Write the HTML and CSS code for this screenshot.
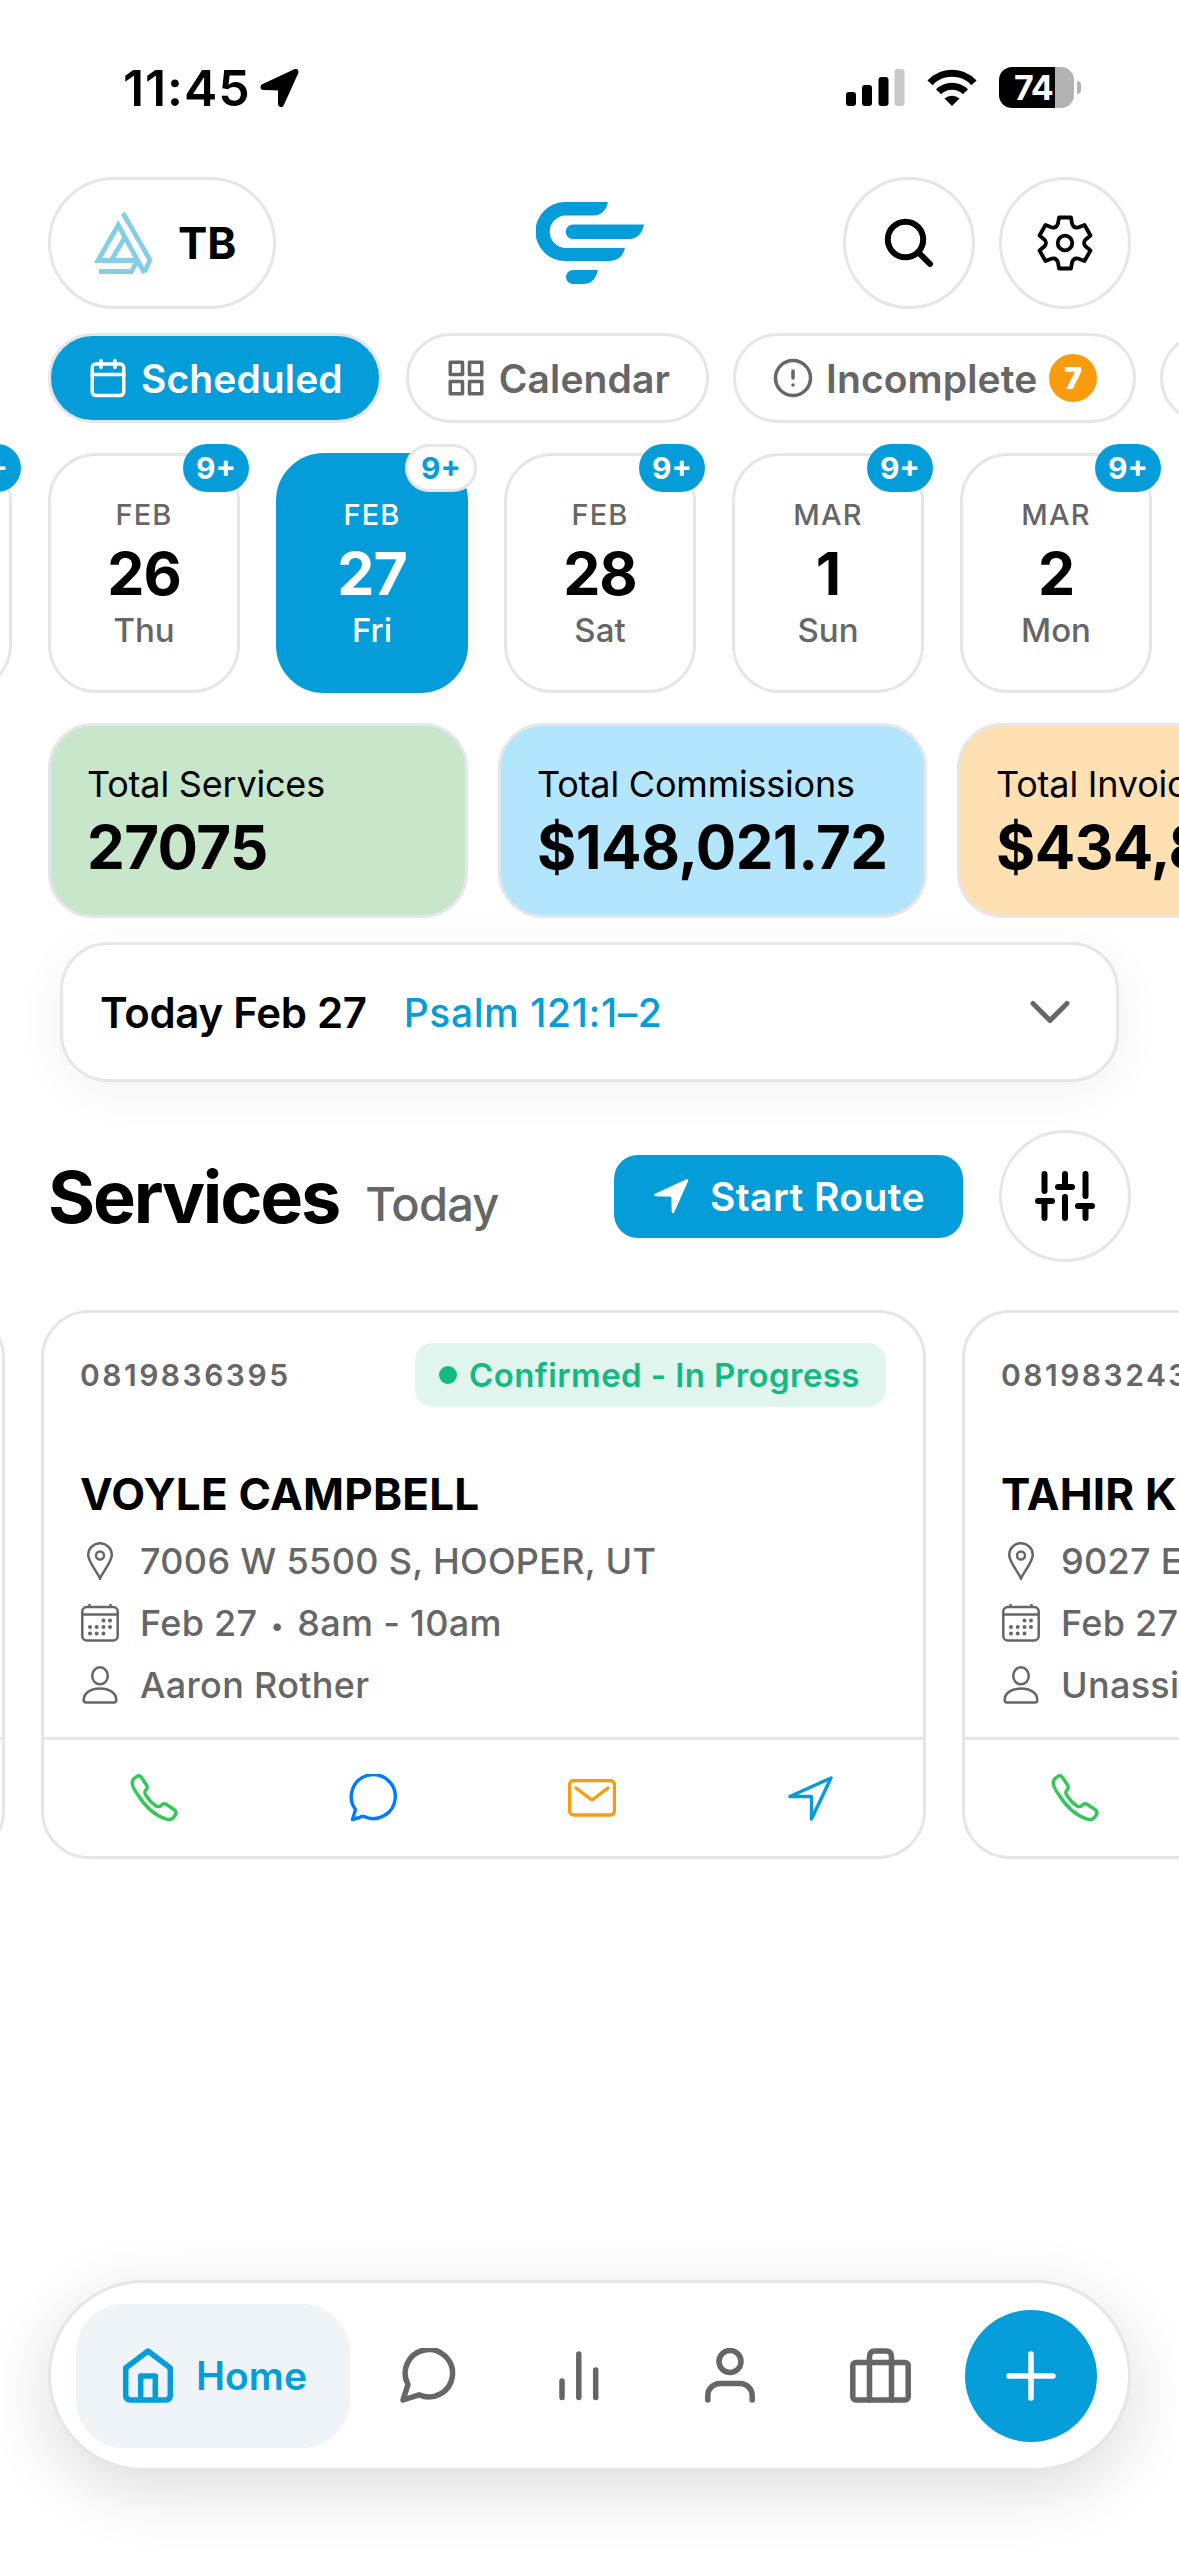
FILE: index.html
```
<!DOCTYPE html>
<html lang="en">
<head>
    <meta charset="UTF-8">
    <meta name="viewport" content="width=device-width, initial-scale=1.0">
    <title>Services</title>
    <link rel="stylesheet" href="styles.css">
</head>
<body>
    <!-- Status bar -->
    <div class="status-bar">
        <div class="status-left">
            <span class="time">11:45</span>
            <svg class="location" width="39" height="38" viewBox="0 0 39 38"><path d="M3.5 18L35.5 3L21 35V18.5z" fill="#000" stroke="#000" stroke-width="6" stroke-linejoin="round"/></svg>
        </div>
        <div class="status-right">
            <svg width="59" height="37" viewBox="0 0 59 37"><rect x="0" y="23" width="10" height="14" rx="3"/><rect x="16" y="16" width="10" height="21" rx="3"/><rect x="32.5" y="8" width="10" height="29" rx="3"/><rect x="48.5" y="0" width="10" height="37" rx="3" fill="#c8c8c8"/></svg>
            <svg width="50" height="37" viewBox="0 0 50 37"><path d="M3 13.8A30 30 0 0 1 47 13.8M11.5 22.8A19 19 0 0 1 38.5 22.8" fill="none" stroke="#000" stroke-width="7"/><path d="M17.5 29.5A12 12 0 0 1 32.5 29.5L25 37z"/></svg>
            <div class="battery"><span>74</span></div>
        </div>
    </div>

    <!-- Header -->
    <header class="header">
        <button class="account">
            <svg width="60" height="67" viewBox="0 0 60 67" fill="none" stroke="#86cde6" stroke-width="4.8"><path d="M50.500 63L24.300 15L4 50.500H42M29 3L56 50L50.500 62M17.500 50L30.500 28M5 61.500H37.500L42 53"/></svg>
            <span class="account-name">TB</span>
        </button>
        <svg class="logo" width="108" height="82" viewBox="0 0 108 82" fill="#059dd9"><path d="M72 0H29A29.5 29.5 0 0 0 29 59H73Q86 59 89 46H30A16 16 0 0 1 30 13.5H57Q69 13.5 72 0zM37 22.5H108Q105 37 93 37H37A7.2 7.2 0 0 1 37 22.5zM37 68H62Q59 82 47 82H37A7 7 0 0 1 37 68z"/></svg>
        <div class="header-actions">
            <button class="circle"><svg width="50" height="50" viewBox="0 0 50 50" fill="none" stroke="#000" stroke-width="6" stroke-linecap="round"><circle cx="21.5" cy="21.5" r="17.7"/><path d="M34.5 34.500L46 46"/></svg></button>
            <button class="circle"><svg width="56" height="56" viewBox="-28 -28 56 56" fill="none" stroke="#000" stroke-width="3.8" stroke-linejoin="round"><path d="M-6-25.500H6L7-19.500Q8.500-14.500 13-15.500L19.500-18L25.500-7.500L21-3.800Q17 0 21 3.800L25.500 7.500L19.500 18L13 15.500Q8.500 14.500 7 19.500L6 25.500H-6L-7 19.500Q-8.500 14.500-13 15.500L-19.500 18L-25.500 7.500L-21 3.800Q-17 0-21-3.800L-25.500-7.500L-19.500-18L-13-15.500Q-8.500-14.500-7-19.500z"/><circle r="7.3"/></svg></button>
        </div>
    </header>

    <!-- View tabs -->
    <nav class="tabs">
        <button class="tab active">
            <svg class="tab-icon" viewBox="0 0 24 24"><rect x="3" y="4" width="18" height="18" rx="2"/><path d="M16 2v4M8 2v4M3 10h18"/></svg>
            <span>Scheduled</span>
        </button>
        <button class="tab">
            <svg class="tab-icon" viewBox="0 0 24 24"><path d="M3 3h7v7H3zM14 3h7v7h-7zM14 14h7v7h-7zM3 14h7v7H3z"/></svg>
            <span>Calendar</span>
        </button>
        <button class="tab">
            <svg class="tab-icon" viewBox="0 0 24 24"><circle cx="12" cy="12" r="10"/><path d="M12 8v4M12 16h.01"/></svg>
            <span>Incomplete</span>
            <b class="count">7</b>
        </button>
        <button class="tab tab-next"></button>
    </nav>

    <!-- Dates -->
    <div class="dates">
        <div class="date"><b class="badge">9+</b></div>
        <div class="date"><b class="badge">9+</b><span class="month">FEB</span><span class="day">26</span><span class="weekday">Thu</span></div>
        <div class="date selected"><b class="badge">9+</b><span class="month">FEB</span><span class="day">27</span><span class="weekday">Fri</span></div>
        <div class="date"><b class="badge">9+</b><span class="month">FEB</span><span class="day">28</span><span class="weekday">Sat</span></div>
        <div class="date"><b class="badge">9+</b><span class="month">MAR</span><span class="day">1</span><span class="weekday">Sun</span></div>
        <div class="date"><b class="badge">9+</b><span class="month">MAR</span><span class="day">2</span><span class="weekday">Mon</span></div>
    </div>

    <!-- Totals -->
    <div class="stats">
        <div class="stat green"><span class="stat-label">Total Services</span><span class="stat-value">27075</span></div>
        <div class="stat blue"><span class="stat-label">Total Commissions</span><span class="stat-value">$148,021.72</span></div>
        <div class="stat orange"><span class="stat-label">Total Invoices</span><span class="stat-value">$434,800.00</span></div>
    </div>

    <div class="verse">
        <span class="verse-date">Today Feb 27</span>
        <span class="verse-ref">Psalm 121:1–2</span>
        <svg class="chevron" width="42" height="26" viewBox="0 0 42 26" fill="none" stroke="#666" stroke-width="5" stroke-linecap="round" stroke-linejoin="round"><path d="M4 4.5L21 21.5L38 4.5"/></svg>
    </div>

    <!-- Services -->
    <div class="services-head">
        <h1>Services</h1>
        <span class="services-day">Today</span>
        <button class="route">
            <svg width="35" height="35" viewBox="0 0 35 35"><path d="M1.5 16L33 1.5L19 33L18.500 16.5z" fill="#fff" stroke="#fff" stroke-width="2.5" stroke-linejoin="round"/></svg>
            <span>Start Route</span>
        </button>
        <button class="circle"><svg width="60" height="52" viewBox="0 0 60 52" fill="none" stroke="#000" stroke-width="6" stroke-linecap="round"><path d="M9.5 4V21M3 31H17M9.5 31V48M30 4V17M23 17H37M30 27V48M50.5 4V26M43 36H57M50.5 36V48"/></svg></button>
    </div>

    <div class="services">
        <div class="service"><div class="service-body"></div><div class="service-actions"></div></div>
        <div class="service">
            <div class="service-body">
                <div class="service-top">
                    <span class="service-id">0819836395</span>
                    <span class="state"><i></i><span>Confirmed - In Progress</span></span>
                </div>
                <h2>VOYLE CAMPBELL</h2>
                <div class="line"><svg class="line-icon" viewBox="0 0 38 38"><path d="M19 36.500C17 31 7.200 20 7.200 13A11.800 11.800 0 0 1 30.800 13C30.800 20 21 31 19 36.500z"/><circle cx="19" cy="13.5" r="4"/></svg><span>7006 W 5500 S, HOOPER, UT</span></div>
                <div class="line"><svg class="line-icon" viewBox="0 0 38 38"><rect x="1.3" y="3" width="35.4" height="33.5" rx="4.5"/><path d="M1.300 10.500H36.700M8.500 0V3M29.500 0V3"/><path class="dots" d="M22.500 16.500h0M29 16.500h0M9 23h0M15.700 23h0M22.500 23h0M29 23h0M9 29.500h0M15.700 29.500h0M22.500 29.500h0"/></svg><span>Feb 27 <small>•</small> 8am - 10am</span></div>
                <div class="line"><svg class="line-icon" viewBox="0 0 38 38"><ellipse cx="19" cy="9.8" rx="7.8" ry="8.5"/><path d="M2.700 34C2.700 27 9.500 22.500 19 22.500S35.300 27 35.300 34Q35.300 36.500 33 36.500H5Q2.700 36.500 2.700 34z"/></svg><span>Aaron Rother</span></div>
            </div>
            <div class="service-actions">
                <svg class="phone" width="48" height="48" viewBox="0 0 48 48"><path d="M4 4.500L7 2.300Q9.500 1 11.500 3.500L16.500 11Q18.300 14 15.500 16.500Q14 18.500 16 21.500Q20 28 26 32Q29 33.500 31 31.500Q33.500 28.500 36.500 30.500L44 35.500Q47 37.500 45.500 40.500L43 44Q40.500 46.500 36 45Q20 40 8 21Q-1 9 4 4.500z"/></svg>
                <svg class="chat" width="48" height="48" viewBox="0 0 48 48"><path d="M3.500 45.500L6.500 35.500A22 22 0 1 1 15 42.500Q12.500 42 10.500 43.500z"/></svg>
                <svg class="mail" width="48" height="38" viewBox="0 0 48 38"><rect x="1.5" y="1.5" width="45" height="34.5" rx="4.5"/><path d="M8 9L24 21L40 9"/></svg>
                <svg class="nav" width="45" height="45" viewBox="0 0 45 45"><path d="M1.800 20.500L43 2L23.500 43V20.500z"/></svg>
            </div>
        </div>
        <div class="service">
            <div class="service-body">
                <div class="service-top"><span class="service-id">0819832431</span></div>
                <h2>TAHIR KHAN</h2>
                <div class="line"><svg class="line-icon" viewBox="0 0 38 38"><path d="M19 36.500C17 31 7.200 20 7.200 13A11.800 11.800 0 0 1 30.800 13C30.800 20 21 31 19 36.500z"/><circle cx="19" cy="13.5" r="4"/></svg><span>9027 E</span></div>
                <div class="line"><svg class="line-icon" viewBox="0 0 38 38"><rect x="1.3" y="3" width="35.4" height="33.5" rx="4.5"/><path d="M1.300 10.500H36.700M8.500 0V3M29.500 0V3"/><path class="dots" d="M22.500 16.500h0M29 16.500h0M9 23h0M15.700 23h0M22.500 23h0M29 23h0M9 29.500h0M15.700 29.500h0M22.500 29.500h0"/></svg><span>Feb 27</span></div>
                <div class="line"><svg class="line-icon" viewBox="0 0 38 38"><ellipse cx="19" cy="9.8" rx="7.8" ry="8.5"/><path d="M2.700 34C2.700 27 9.500 22.500 19 22.500S35.300 27 35.300 34Q35.300 36.500 33 36.500H5Q2.700 36.500 2.700 34z"/></svg><span>Unassigned</span></div>
            </div>
            <div class="service-actions">
                <svg class="phone" width="48" height="48" viewBox="0 0 48 48"><path d="M4 4.500L7 2.300Q9.500 1 11.500 3.500L16.500 11Q18.300 14 15.500 16.500Q14 18.500 16 21.500Q20 28 26 32Q29 33.500 31 31.500Q33.500 28.500 36.500 30.500L44 35.500Q47 37.500 45.500 40.500L43 44Q40.500 46.500 36 45Q20 40 8 21Q-1 9 4 4.500z"/></svg>
            </div>
        </div>
    </div>

    <!-- Bottom navigation -->
    <nav class="bottom-nav">
        <a class="home">
            <svg width="50" height="55" viewBox="0 0 50 55"><path d="M25 3L47.300 20V47Q47.300 52 42 52H8Q2.700 52 2.700 47V20zM17.700 52V28H32.300V52"/></svg>
            <span>Home</span>
        </a>
        <div class="nav-items">
            <svg width="56" height="55" viewBox="0 0 56 55"><path d="M3 52L8 36.500A23.700 23.700 0 1 1 19 46.800z"/></svg>
            <svg width="40" height="55" viewBox="0 0 40 55"><path d="M3 33V49.500M19.800 6V49.500M36.700 22V49.500"/></svg>
            <svg width="50" height="55" viewBox="0 0 50 55"><circle cx="25" cy="13.5" r="11"/><path d="M2.800 52V47A12 12 0 0 1 14.500 35.500H35.500A12 12 0 0 1 47.200 47V52"/></svg>
            <svg width="61" height="55" viewBox="0 0 61 55"><rect x="2.8" y="14.5" width="55.4" height="37.5" rx="3"/><path d="M19.500 52V9Q19.500 3 25 3H36Q41.500 3 41.500 9V52"/></svg>
        </div>
        <button class="add"><svg width="50" height="50" viewBox="0 0 50 50"><path d="M25 3V47M3 25H47" stroke="#fff"/></svg></button>
    </nav>
</body>
</html>
```
FILE: styles.css
```
* {
    box-sizing: border-box;
    margin: 0;
    padding: 0;
}

html {
    overflow: hidden;
}

body {
    width: 1179px;
    height: 2556px;
    background: #fff;
    color: #000;
    font-family: Inter, "Liberation Sans", sans-serif;
    overflow: hidden;
    position: relative;
}

button {
    font: inherit;
    color: inherit;
    background: #fff;
    border: 3px solid #e5e5ea;
    flex-shrink: 0;
}

svg {
    display: block;
    flex-shrink: 0;
}

span, b, h1, h2 {
    white-space: nowrap;
}

/* Status bar */
.status-bar {
    display: flex;
    justify-content: space-between;
    height: 177px;
    padding: 67px 99px 0 123px;
}

.status-left, .status-right {
    display: flex;
    align-items: center;
    height: 41px;
}

.time {
    font-size: 50px;
    font-weight: 600;
    letter-spacing: 0.9px;
}

.location {
    margin-left: 10px;
}

.status-right {
    gap: 22px;
}

.battery {
    position: relative;
    width: 75px;
    height: 41px;
    margin-right: 6px;
    padding-left: 15px;
    border-radius: 13px;
    background: linear-gradient(to right, #000 56px, #b3b3b3 56px);
    color: #fff;
    font-size: 34px;
    font-weight: 700;
    line-height: 41px;
    letter-spacing: -1px;
}

.battery::after {
    content: "";
    position: absolute;
    left: 78px;
    top: 14px;
    width: 4px;
    height: 13px;
    border-radius: 0 4px 4px 0;
    background: #b3b3b3;
}

/* Header */
.header {
    display: grid;
    grid-template-columns: 1fr auto 1fr;
    align-items: center;
    height: 132px;
    padding: 0 48px;
}

.account {
    display: flex;
    align-items: center;
    width: 228px;
    height: 132px;
    padding-left: 43px;
    border-radius: 66px;
}

.account-name {
    margin-left: 24px;
    font-size: 44px;
    font-weight: 700;
}

.header-actions {
    display: flex;
    justify-content: flex-end;
    gap: 24px;
}

.circle {
    display: flex;
    align-items: center;
    justify-content: center;
    width: 132px;
    height: 132px;
    border-radius: 50%;
}

/* Tabs */
.tabs {
    display: flex;
    gap: 24px;
    margin-top: 24px;
    padding-left: 48px;
}

.tab {
    display: flex;
    align-items: center;
    gap: 12px;
    height: 90px;
    padding: 0 36px;
    border-radius: 45px;
    color: #666;
    font-size: 39px;
    font-weight: 600;
    letter-spacing: 0.1px;
}

.tab.active {
    background: #059dd9;
    color: #fff;
}

.tab-next {
    width: 300px;
}

.tab-icon {
    width: 42px;
    height: 42px;
    fill: none;
    stroke: currentColor;
    stroke-width: 2;
    stroke-linecap: round;
    stroke-linejoin: round;
}

.count {
    width: 48px;
    height: 48px;
    border-radius: 50%;
    background: #f89c0e;
    color: #fff;
    font-size: 30px;
    line-height: 48px;
    text-align: center;
}

/* Dates */
.dates {
    display: flex;
    gap: 36px;
    margin: 30px 0 0 -180px;
}

.date {
    position: relative;
    display: flex;
    flex-direction: column;
    align-items: center;
    flex-shrink: 0;
    width: 192px;
    height: 240px;
    padding-top: 38px;
    border: 3px solid #e5e5ea;
    border-radius: 48px;
    color: #666;
}

.badge {
    position: absolute;
    top: -12px;
    right: -12px;
    width: 66px;
    height: 48px;
    border-radius: 24px;
    background: #059dd9;
    color: #fff;
    font-size: 30px;
    line-height: 48px;
    text-align: center;
}

.month {
    font-size: 29px;
    font-weight: 500;
    line-height: 41px;
    letter-spacing: 1.2px;
}

.day {
    color: #000;
    font-size: 59px;
    font-weight: 700;
    line-height: 78px;
    letter-spacing: -1px;
}

.weekday {
    font-size: 33px;
    font-weight: 500;
    line-height: 34px;
}

.date.selected {
    background: #059dd9;
    border-color: #059dd9;
    color: #fff;
}

.selected .day {
    color: #fff;
}

.selected .badge {
    width: 72px;
    border: 3px solid #e5e5ea;
    background: #fff;
    color: #059dd9;
    line-height: 42px;
}

/* Totals */
.stats {
    display: flex;
    gap: 30px;
    margin-top: 30px;
    padding-left: 48px;
}

.stat {
    display: flex;
    flex-direction: column;
    flex-shrink: 0;
    width: 420px;
    height: 195px;
    padding: 36px 0 0 36px;
    border: 3px solid #e5e5ea;
    border-radius: 45px;
}

.green {
    background: #c8e6c9;
}

.blue {
    width: 429px;
    background: #b3e5fc;
}

.orange {
    background: #ffe0b2;
}

.stat-label {
    font-size: 36px;
    line-height: 44px;
    letter-spacing: -0.2px;
}

.stat-value {
    font-size: 60px;
    font-weight: 700;
    line-height: 82px;
    letter-spacing: -0.6px;
}

/* Verse of the day */
.verse {
    display: flex;
    align-items: center;
    height: 140px;
    margin: 24px 60px 0;
    padding: 0 45px 0 37px;
    border: 3px solid #e5e5ea;
    border-radius: 48px;
    background: #fff;
    box-shadow: 0 9px 48px rgba(0, 0, 0, 0.055);
}

.verse-date {
    font-size: 42px;
    font-weight: 600;
    letter-spacing: -0.3px;
}

.verse-ref {
    margin-left: 37px;
    color: #059dd9;
    font-size: 39px;
    font-weight: 500;
    letter-spacing: 0.6px;
}

.chevron {
    margin-left: auto;
}

/* Services */
.services-head {
    display: flex;
    align-items: center;
    height: 132px;
    margin-top: 48px;
    padding: 0 48px;
}

h1 {
    font-size: 72px;
    font-weight: 700;
    letter-spacing: -2.2px;
}

.services-day {
    margin: 14px 0 0 26px;
    color: #666;
    font-size: 47px;
    font-weight: 500;
    letter-spacing: -0.8px;
}

.route {
    display: flex;
    align-items: center;
    width: 349px;
    height: 83px;
    margin: 0 36px 0 auto;
    padding-left: 40px;
    border: none;
    border-radius: 24px;
    background: #059dd9;
    color: #fff;
    font-size: 39px;
    font-weight: 600;
    letter-spacing: 0.4px;
}

.route span {
    margin-left: 21px;
}

.services {
    display: flex;
    gap: 36px;
    margin: 48px 0 0 -880px;
}

.service {
    display: flex;
    flex-direction: column;
    flex-shrink: 0;
    width: 885px;
    height: 549px;
    border: 3px solid #e5e5ea;
    border-radius: 48px;
}

.service-body {
    flex: 1;
    padding: 30px 37px 0 36px;
}

.service-top {
    display: flex;
    align-items: center;
    justify-content: space-between;
    height: 64px;
}

.service-id {
    color: #666;
    font-size: 30px;
    font-weight: 600;
    letter-spacing: 2.5px;
}

.state {
    display: flex;
    align-items: center;
    width: 471px;
    height: 64px;
    padding-left: 24px;
    border-radius: 18px;
    background: #e1f5ef;
    color: #12b981;
    font-size: 33px;
    font-weight: 600;
    letter-spacing: 0.4px;
}

.state i {
    width: 18px;
    height: 18px;
    margin-right: 12px;
    border-radius: 50%;
    background: #12b981;
}

h2 {
    height: 60px;
    margin-top: 57px;
    font-size: 44px;
    font-weight: 700;
    line-height: 60px;
    letter-spacing: 0.2px;
}

.line {
    display: flex;
    align-items: center;
    height: 62px;
    margin-left: 1px;
    color: #666;
    font-size: 36px;
    font-weight: 500;
    letter-spacing: 0.3px;
}

.line small {
    display: inline-block;
    width: 20px;
    font-size: 24px;
    text-align: center;
    vertical-align: 2px;
}

h2 + .line {
    margin-top: 6px;
}

.line-icon {
    width: 38px;
    height: 38px;
    margin-right: 21px;
    fill: none;
    stroke: #666;
    stroke-width: 2.5;
}

.line-icon .dots {
    stroke-width: 4;
    stroke-linecap: round;
}

.service-actions {
    display: grid;
    grid-template-columns: repeat(4, 1fr);
    align-items: center;
    justify-items: center;
    height: 119px;
    padding-right: 3px;
    border-top: 3px solid #e5e5ea;
}

.service-actions svg {
    fill: none;
    stroke-width: 3.4;
    stroke-linecap: round;
    stroke-linejoin: round;
}

.phone {
    stroke: #34c759;
}

.chat {
    stroke: #007aff;
}

.mail {
    stroke: #f89c0e;
}

.nav {
    stroke: #059dd9;
}

/* Bottom navigation floats over the page */
.bottom-nav {
    position: absolute;
    left: 48px;
    right: 48px;
    bottom: 85px;
    display: flex;
    align-items: center;
    height: 191px;
    padding: 0 31px 0 25px;
    border: 3px solid #e5e5ea;
    border-radius: 96px;
    background: #fff;
    box-shadow: 0 18px 66px rgba(0, 0, 0, 0.14);
}

.bottom-nav svg {
    fill: none;
    stroke: #666;
    stroke-width: 5.5;
    stroke-linecap: round;
    stroke-linejoin: round;
}

.home {
    display: flex;
    align-items: center;
    width: 274px;
    height: 144px;
    padding-left: 47px;
    border-radius: 48px;
    background: #eff4f8;
    color: #059dd9;
    font-size: 39px;
    font-weight: 600;
}

.home svg {
    margin-right: 23px;
    stroke: #059dd9;
}

.nav-items {
    flex: 1;
    display: grid;
    grid-template-columns: repeat(4, 1fr);
    justify-items: center;
    padding: 0 9px 0 2px;
}

.add {
    display: flex;
    align-items: center;
    justify-content: center;
    width: 132px;
    height: 132px;
    border: none;
    border-radius: 50%;
    background: #059dd9;
}
```
